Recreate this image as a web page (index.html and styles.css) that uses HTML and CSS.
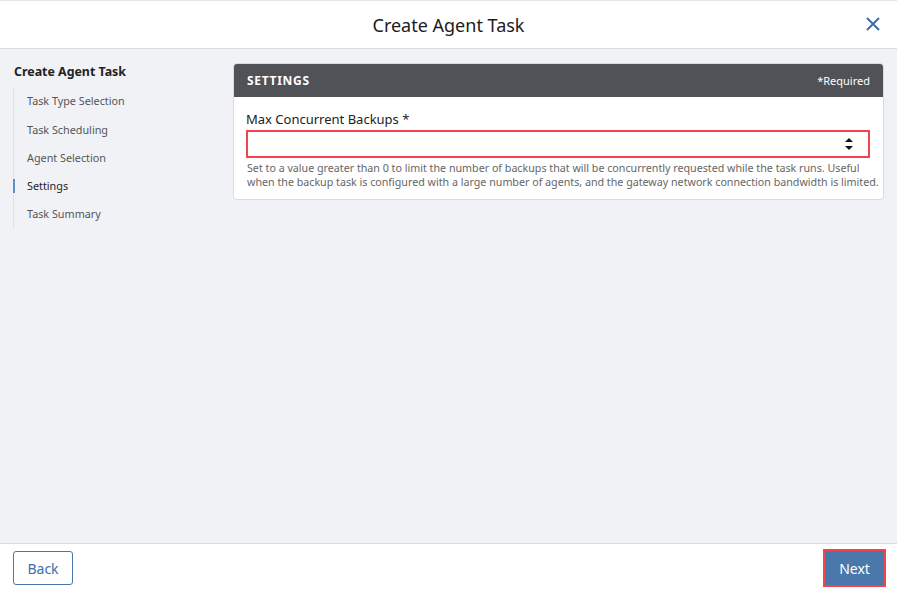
FILE: index.html
```html
<!DOCTYPE html>
<html lang="en">
<head>
  <meta charset="UTF-8" />
  <meta name="viewport" content="width=device-width, initial-scale=1.0" />
  <title>Create Agent Task</title>
  <link rel="stylesheet" href="styles.css">
</head>
<body>
  <div class="dialog">
    <header class="dialog-head">
      <h1>Create Agent Task</h1>
      <button class="close" aria-label="Close">
        <svg width="16" height="16" viewBox="0 0 16 16"><path d="M2 2 L14 14 M14 2 L2 14" stroke="#3b6fab" stroke-width="2" fill="none"/></svg>
      </button>
    </header>

    <div class="dialog-main">
      <nav class="steps">
        <div class="steps-title">Create Agent Task</div>
        <ul>
          <li>Task Type Selection</li>
          <li>Task Scheduling</li>
          <li>Agent Selection</li>
          <li class="active">Settings</li>
          <li>Task Summary</li>
        </ul>
      </nav>

      <section class="card">
        <div class="card-head">
          <span class="card-title">SETTINGS</span>
          <span class="required">*Required</span>
        </div>
        <div class="card-body">
          <label class="field-label" for="maxBackups">Max Concurrent Backups *</label>
          <div class="num-input">
            <input id="maxBackups" type="text" />
            <span class="spin">
              <svg width="8" height="14" viewBox="0 0 8 14"><path d="M4 1 L8 5 L0 5 Z M0 9 L8 9 L4 13 Z" fill="#111"/></svg>
            </span>
          </div>
          <p class="help">Set to a value greater than 0 to limit the number of backups that will be concurrently requested while the task runs. Useful<br>when the backup task is configured with a large number of agents, and the gateway network connection bandwidth is limited.</p>
        </div>
      </section>
    </div>

    <footer class="dialog-foot">
      <button class="btn btn-back">Back</button>
      <button class="btn btn-next">Next</button>
    </footer>
  </div>
</body>
</html>
```

FILE: styles.css
```css
:root {
  --blue: #4a78aa;
  --link: #3b6fab;
  --bg: #f1f2f6;
  --line: #d9dbe0;
  --danger: #f2444b;
}
* { box-sizing: border-box; }
html, body { margin: 0; height: 100%; }
body {
  font-family: "Noto Sans", "Open Sans", sans-serif;
  color: #222;
  background: var(--bg);
}
.dialog {
  height: 100vh;
  display: flex;
  flex-direction: column;
  border-top: 1px solid #e3e5ea;
}
.dialog-head {
  height: 48px;
  background: #fff;
  border-bottom: 1px solid var(--line);
  display: flex;
  align-items: center;
  justify-content: center;
  position: relative;
}
.dialog-head h1 {
  margin: 0;
  font-size: 18px;
  font-weight: 400;
  color: #1b1b1b;
}
.close {
  position: absolute;
  right: 16px;
  top: 15px;
  border: none;
  background: none;
  padding: 0;
  width: 16px;
  height: 16px;
}
.close svg { display: block; }

.dialog-main {
  flex: 1;
  display: flex;
  gap: 14px;
  padding: 14px 13px 0 13px;
}
.steps { width: 206px; flex: none; }
.steps-title {
  font-size: 12.4px;
  font-weight: 700;
  color: #222;
  line-height: 17px;
  padding-left: 1px;
}
.steps ul {
  list-style: none;
  margin: 7px 0 0;
  padding: 0;
}
.steps li {
  border-left: 1px solid #dfe1e6;
  height: 28px;
  line-height: 28px;
  padding-left: 13px;
  font-size: 10.8px;
  color: #555;
  position: relative;
}
.steps li:first-child { height: 29px; }
.steps li.active { color: #222; }
.steps li.active::before {
  content: "";
  position: absolute;
  left: -1px;
  top: 7px;
  width: 2px;
  height: 14px;
  background: #5d8fc6;
}

.card {
  flex: 1;
  align-self: flex-start;
  background: #fff;
  border: 1px solid var(--line);
  border-radius: 4px;
  overflow: hidden;
}
.card-head {
  background: #505257;
  color: #fff;
  height: 33px;
  display: flex;
  align-items: center;
  justify-content: space-between;
  padding: 0 13px;
}
.card-title {
  font-size: 12px;
  font-weight: 700;
  letter-spacing: 0.7px;
}
.required { font-size: 11px; }
.card-body { padding: 13px 13px 10px 12px; }
.field-label {
  display: block;
  font-size: 13px;
  line-height: 18px;
  color: #222;
}
.num-input {
  margin-top: 2px;
  height: 28px;
  border: 2px solid var(--danger);
  display: flex;
  align-items: center;
}
.num-input input {
  flex: 1;
  border: none;
  outline: none;
  height: 100%;
  background: transparent;
  font: inherit;
}
.spin {
  width: 8px;
  margin-right: 15px;
  display: flex;
}
.help {
  margin: 3px 0 0 1px;
  font-size: 10.7px;
  line-height: 14px;
  color: #666;
  white-space: nowrap;
}

.dialog-foot {
  height: 49px;
  background: #fff;
  border-top: 1px solid var(--line);
  display: flex;
  align-items: center;
  justify-content: space-between;
  padding: 0 13px;
}
.btn {
  height: 34px;
  padding: 0 11px;
  border-radius: 3px;
  font: inherit;
  font-size: 14px;
}
.btn-back {
  width: 60px;
  border: 1px solid var(--blue);
  background: #fff;
  color: var(--link);
}
.btn-next {
  width: 59px;
  border: none;
  border-radius: 0;
  background: var(--blue);
  color: #fff;
  outline: 2px solid var(--danger);
}
```
